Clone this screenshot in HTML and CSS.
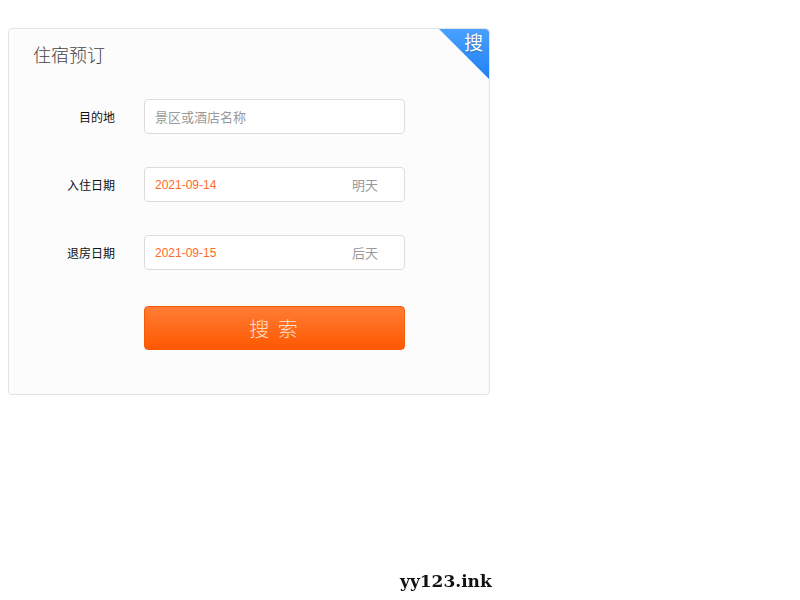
FILE: index.html
```html
<!DOCTYPE html>
<html lang="zh-CN">
<head>
<meta charset="utf-8">
<title>住宿预订</title>
<link rel="stylesheet" href="styles.css">
</head>
<body>
<div class="page">
  <div class="card">
    <div class="ribbon"><span class="ribbon-text">搜</span></div>
    <h2 class="title">住宿预订</h2>
    <form class="form">
      <div class="row">
        <label class="label">目的地</label>
        <div class="field"><span class="placeholder">景区或酒店名称</span></div>
      </div>
      <div class="row">
        <label class="label">入住日期</label>
        <div class="field"><span class="date">2021-09-14</span><span class="hint">明天</span></div>
      </div>
      <div class="row">
        <label class="label">退房日期</label>
        <div class="field"><span class="date">2021-09-15</span><span class="hint">后天</span></div>
      </div>
      <div class="row row-btn">
        <span class="label"></span>
        <button type="button" class="btn">搜 索</button>
      </div>
    </form>
  </div>
</div>
<div class="watermark">yy123.ink</div>
</body>
</html>
```
FILE: styles.css
```css
html, body {
  margin: 0;
  padding: 0;
}
body {
  margin: 8px;
  font-family: "Liberation Sans", "Noto Sans CJK SC", sans-serif;
  background: #fff;
}
.page {
  padding-top: 20px;
}
.card {
  position: relative;
  width: 480px;
  height: 365px;
  border: 1px solid #e3e3e3;
  border-radius: 4px;
  background: #fcfcfc;
  overflow: hidden;
}
.ribbon {
  position: absolute;
  top: 0;
  right: 0;
  width: 50px;
  height: 50px;
  background: linear-gradient(to bottom, #4aa0ff, #1f80f2);
  clip-path: polygon(0 0, 100% 0, 100% 100%);
  border-top-right-radius: 4px;
}
.ribbon::after {
  content: "";
  position: absolute;
  inset: 0;
  background: linear-gradient(225deg, transparent 68%, rgba(20,70,140,0.45) 70%);
}
.ribbon-text {
  position: absolute;
  top: 1px;
  right: 6px;
  font-family: "Noto Sans CJK SC", sans-serif;
  font-size: 19px;
  line-height: 24px;
  color: #fff;
  text-shadow: 0 1px 1px rgba(0,0,0,0.25);
  z-index: 1;
}
.title {
  margin: 0;
  padding: 13px 0 0 24px;
  font-family: "Noto Sans CJK SC", sans-serif;
  font-size: 18px;
  font-weight: 300;
  line-height: 24px;
  color: #444;
}
.form {
  margin-top: 33px;
  display: flex;
  flex-direction: column;
  gap: 33px;
}
.row {
  display: flex;
  align-items: center;
}
.row-btn {
  margin-top: 3px;
}
.label {
  width: 106px;
  margin-right: 29px;
  text-align: right;
  font-family: "Noto Sans CJK SC", sans-serif;
  font-size: 12px;
  color: #111;
}
.field {
  box-sizing: border-box;
  width: 261px;
  height: 35px;
  border: 1px solid #dcdcdc;
  border-radius: 4px;
  background: #fff;
  display: flex;
  align-items: center;
  justify-content: space-between;
  padding: 0 26px 0 10px;
  font-size: 13px;
}
.placeholder {
  font-family: "Noto Sans CJK SC", sans-serif;
  color: #999;
  font-size: 13px;
}
.date {
  color: #ff6a1f;
  font-family: "Liberation Sans", sans-serif;
  font-size: 12px;
}
.hint {
  font-family: "Noto Sans CJK SC", sans-serif;
  color: #999;
}
.btn {
  box-sizing: border-box;
  width: 261px;
  height: 44px;
  border: 1px solid #f55a0a;
  border-radius: 4px;
  background: linear-gradient(to bottom, #ff7d35, #ff5800);
  color: #fde0d0;
  font-family: "Noto Sans CJK SC", sans-serif;
  font-size: 20px;
  font-weight: 300;
  letter-spacing: 2px;
  padding: 0;
  cursor: pointer;
}
.watermark {
  position: fixed;
  left: 400px;
  bottom: 9px;
  font-family: "DejaVu Serif", serif;
  font-weight: bold;
  font-size: 17px;
  line-height: 20px;
  color: #111;
}
```
